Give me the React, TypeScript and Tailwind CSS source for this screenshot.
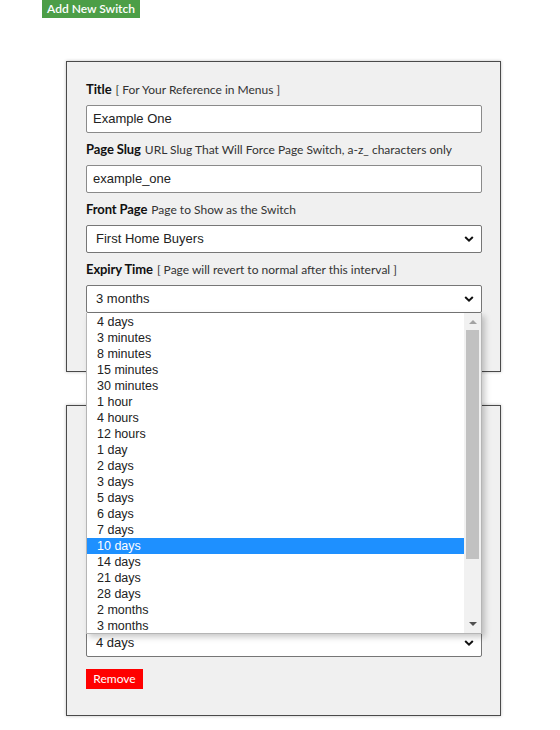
import React from "react";

const Chevron = () => (
  <svg width="10" height="7" viewBox="0 0 10 7" className="absolute right-[7px] top-1/2 -translate-y-1/2">
    <path d="M1.2 1.5 L5 5.2 L8.8 1.5" fill="none" stroke="#111" strokeWidth="2" />
  </svg>
);

const Label = ({ title, desc }: { title: string; desc: string }) => (
  <div className="h-[18px] mb-[6px] flex items-center whitespace-nowrap font-['Lato',sans-serif]">
    <span className="text-[13px] font-bold text-[#111] tracking-[-0.1px]">{title}</span>
    <span className="text-[12px] text-[#333] ml-[4px]">{desc}</span>
  </div>
);

const TextBox = ({ value }: { value: string }) => (
  <div className="h-[28px] bg-white border border-[#8a8a8a] rounded-[2px] flex items-center pl-[6px] text-[13px] text-[#222] font-['Liberation_Sans',Arial,sans-serif]">
    {value}
  </div>
);

const SelectBox = ({ value }: { value: string }) => (
  <div className="relative h-[28px] bg-white border border-[#767676] rounded-[2px] flex items-center pl-[9px] text-[13px] text-[#222] font-['Liberation_Sans',Arial,sans-serif]">
    {value}
    <Chevron />
  </div>
);

const Panel = ({
  title,
  slug,
  front,
  expiry,
  covered,
  buttonCovered,
}: {
  title: string;
  slug: string;
  front: string;
  expiry: string;
  covered?: boolean;
  buttonCovered?: boolean;
}) => (
  <div className="ml-[66px] w-[435px] border border-[#4a4a4a] bg-[#f0f0f0] pt-[19px] pl-[19px] pr-[18px] pb-[26px] shadow-[0_0_3px_rgba(0,0,0,0.25)]">
    <div className={covered ? "invisible" : ""}>
      <Label title="Title" desc="[ For Your Reference in Menus ]" />
      <TextBox value={title} />
      <div className="mt-[8px]">
        <Label title="Page Slug" desc="URL Slug That Will Force Page Switch, a-z_ characters only" />
        <TextBox value={slug} />
      </div>
      <div className="mt-[8px]">
        <Label title="Front Page" desc="Page to Show as the Switch" />
        <SelectBox value={front} />
      </div>
      <div className="mt-[8px]">
        <Label title="Expiry Time" desc="[ Page will revert to normal after this interval ]" />
      </div>
    </div>
    <SelectBox value={expiry} />
    <div
      className={
        buttonCovered
          ? "invisible mt-[12px] w-[57px] h-[20px] bg-[#ff0000] text-white text-[12px] flex items-center justify-center font-['Lato',sans-serif]"
          : "mt-[12px] w-[57px] h-[20px] bg-[#ff0000] text-white text-[12px] flex items-center justify-center font-['Lato',sans-serif]"
      }
    >
      Remove
    </div>
  </div>
);

const options = [
  "4 days",
  "3 minutes",
  "8 minutes",
  "15 minutes",
  "30 minutes",
  "1 hour",
  "4 hours",
  "12 hours",
  "1 day",
  "2 days",
  "3 days",
  "5 days",
  "6 days",
  "7 days",
  "10 days",
  "14 days",
  "21 days",
  "28 days",
  "2 months",
  "3 months",
];

export default function App() {
  return (
    <div className="relative w-[560px] h-[730px] bg-white overflow-hidden">
      <div className="ml-[42px] w-[98px] h-[18px] bg-[#4c9e47] text-white text-[12px] font-semibold flex items-center justify-center font-['Lato',sans-serif]">
        Add New Switch
      </div>
      <div className="mt-[43px]">
        <Panel title="Example One" slug="example_one" front="First Home Buyers" expiry="3 months" buttonCovered />
      </div>
      <div className="mt-[33px]">
        <Panel title="Example Two" slug="example_two" front="First Home Buyers" expiry="4 days" covered />
      </div>

      {/* open dropdown list */}
      <div className="absolute left-[86px] top-[313px] w-[396px] h-[321px] bg-white border-l border-r border-b border-[#b5b5b5] shadow-[3px_3px_6px_rgba(0,0,0,0.22)] flex overflow-hidden font-['Liberation_Sans',Arial,sans-serif]">
        <div className="flex-1 flex flex-col pt-[1px]">
          {options.map((o, i) => (
            <div
              key={i}
              className={
                i === 14
                  ? "h-[16px] shrink-0 leading-[16px] pl-[10px] text-[12.5px] bg-[#1e90ff] text-white"
                  : "h-[16px] shrink-0 leading-[16px] pl-[10px] text-[12.5px] text-[#222]"
              }
            >
              {o}
            </div>
          ))}
        </div>
        <div className="w-[17px] h-full bg-[#f1f1f1] flex flex-col items-center">
          <div className="h-[17px] w-full flex items-center justify-center">
            <svg width="8" height="5" viewBox="0 0 8 5">
              <path d="M0 5 L4 1 L8 5 Z" fill="#a3a3a3" />
            </svg>
          </div>
          <div className="w-[13px] h-[229px] bg-[#c1c1c1]" />
          <div className="flex-1" />
          <div className="h-[17px] w-full flex items-center justify-center">
            <svg width="8" height="5" viewBox="0 0 8 5">
              <path d="M0 0 L8 0 L4 4 Z" fill="#505050" />
            </svg>
          </div>
        </div>
      </div>
    </div>
  );
}
